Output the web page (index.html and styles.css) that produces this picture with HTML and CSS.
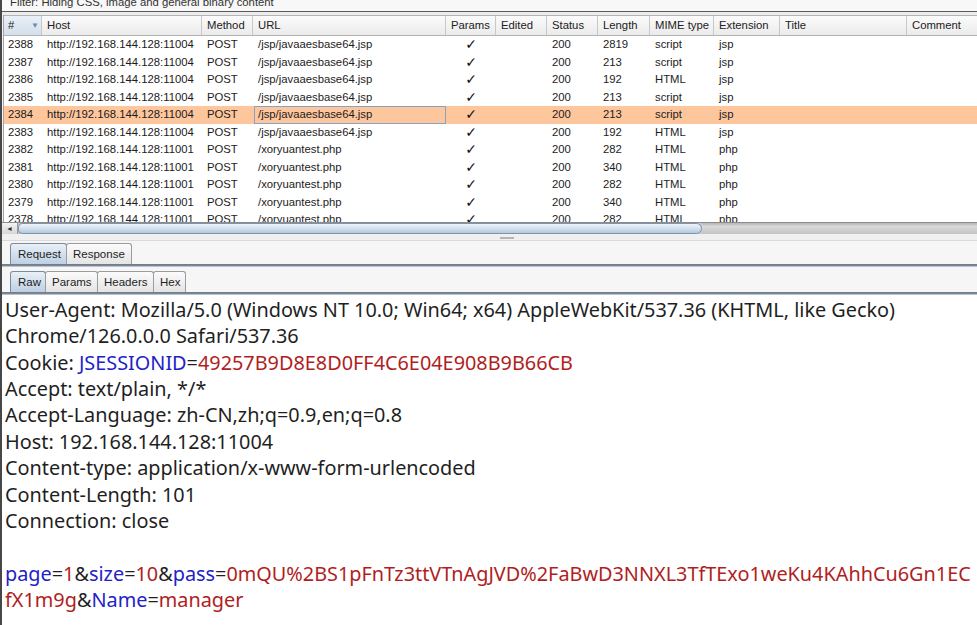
FILE: index.html
```html
<!DOCTYPE html>
<html>
<head>
<meta charset="utf-8">
<link rel="stylesheet" href="styles.css">
</head>
<body>
<div class="win">
  <div class="filter"><span>Filter: Hiding CSS, image and general binary content</span></div>
  <div class="gap"></div>
  <div class="table">
    <div class="row thead">
      <div class="th sorted">#<span class="arrow">▼</span></div>
      <div class="th">Host</div>
      <div class="th">Method</div>
      <div class="th">URL</div>
      <div class="th">Params</div>
      <div class="th">Edited</div>
      <div class="th">Status</div>
      <div class="th">Length</div>
      <div class="th">MIME type</div>
      <div class="th">Extension</div>
      <div class="th">Title</div>
      <div class="th">Comment</div>
    </div>
    <div class="tbody">
      <div class="row"><div class="td">2388</div><div class="td">http://192.168.144.128:11004</div><div class="td">POST</div><div class="td">/jsp/javaaesbase64.jsp</div><div class="td chk">✓</div><div class="td"></div><div class="td">200</div><div class="td">2819</div><div class="td">script</div><div class="td">jsp</div><div class="td"></div><div class="td"></div></div>
      <div class="row"><div class="td">2387</div><div class="td">http://192.168.144.128:11004</div><div class="td">POST</div><div class="td">/jsp/javaaesbase64.jsp</div><div class="td chk">✓</div><div class="td"></div><div class="td">200</div><div class="td">213</div><div class="td">script</div><div class="td">jsp</div><div class="td"></div><div class="td"></div></div>
      <div class="row"><div class="td">2386</div><div class="td">http://192.168.144.128:11004</div><div class="td">POST</div><div class="td">/jsp/javaaesbase64.jsp</div><div class="td chk">✓</div><div class="td"></div><div class="td">200</div><div class="td">192</div><div class="td">HTML</div><div class="td">jsp</div><div class="td"></div><div class="td"></div></div>
      <div class="row"><div class="td">2385</div><div class="td">http://192.168.144.128:11004</div><div class="td">POST</div><div class="td">/jsp/javaaesbase64.jsp</div><div class="td chk">✓</div><div class="td"></div><div class="td">200</div><div class="td">213</div><div class="td">script</div><div class="td">jsp</div><div class="td"></div><div class="td"></div></div>
      <div class="row selected"><div class="td">2384</div><div class="td">http://192.168.144.128:11004</div><div class="td">POST</div><div class="td focus">/jsp/javaaesbase64.jsp</div><div class="td chk">✓</div><div class="td"></div><div class="td">200</div><div class="td">213</div><div class="td">script</div><div class="td">jsp</div><div class="td"></div><div class="td"></div></div>
      <div class="row"><div class="td">2383</div><div class="td">http://192.168.144.128:11004</div><div class="td">POST</div><div class="td">/jsp/javaaesbase64.jsp</div><div class="td chk">✓</div><div class="td"></div><div class="td">200</div><div class="td">192</div><div class="td">HTML</div><div class="td">jsp</div><div class="td"></div><div class="td"></div></div>
      <div class="row"><div class="td">2382</div><div class="td">http://192.168.144.128:11001</div><div class="td">POST</div><div class="td">/xoryuantest.php</div><div class="td chk">✓</div><div class="td"></div><div class="td">200</div><div class="td">282</div><div class="td">HTML</div><div class="td">php</div><div class="td"></div><div class="td"></div></div>
      <div class="row"><div class="td">2381</div><div class="td">http://192.168.144.128:11001</div><div class="td">POST</div><div class="td">/xoryuantest.php</div><div class="td chk">✓</div><div class="td"></div><div class="td">200</div><div class="td">340</div><div class="td">HTML</div><div class="td">php</div><div class="td"></div><div class="td"></div></div>
      <div class="row"><div class="td">2380</div><div class="td">http://192.168.144.128:11001</div><div class="td">POST</div><div class="td">/xoryuantest.php</div><div class="td chk">✓</div><div class="td"></div><div class="td">200</div><div class="td">282</div><div class="td">HTML</div><div class="td">php</div><div class="td"></div><div class="td"></div></div>
      <div class="row"><div class="td">2379</div><div class="td">http://192.168.144.128:11001</div><div class="td">POST</div><div class="td">/xoryuantest.php</div><div class="td chk">✓</div><div class="td"></div><div class="td">200</div><div class="td">340</div><div class="td">HTML</div><div class="td">php</div><div class="td"></div><div class="td"></div></div>
      <div class="row"><div class="td">2378</div><div class="td">http://192.168.144.128:11001</div><div class="td">POST</div><div class="td">/xoryuantest.php</div><div class="td chk">✓</div><div class="td"></div><div class="td">200</div><div class="td">282</div><div class="td">HTML</div><div class="td">php</div><div class="td"></div><div class="td"></div></div>
    </div>
  </div>
  <div class="hscroll">
    <div class="sbtn">◄</div>
    <div class="thumb"></div>
    <div class="track"></div>
  </div>
  <div class="splitter"><div class="grip"></div></div>
  <div class="panel">
    <div class="tabs tabs1">
      <div class="tab sel w-req">Request</div>
      <div class="tab w-resp">Response</div>
    </div>
    <div class="tabline"></div>
    <div class="tabs tabs2">
      <div class="tab sel w-raw">Raw</div>
      <div class="tab w-params">Params</div>
      <div class="tab w-headers">Headers</div>
      <div class="tab w-hex">Hex</div>
    </div>
    <div class="tabline"></div>
    <div class="editor">
      <div class="ln">User-Agent: Mozilla/5.0 (Windows NT 10.0; Win64; x64) AppleWebKit/537.36 (KHTML, like Gecko)</div>
      <div class="ln">Chrome/126.0.0.0 Safari/537.36</div>
      <div class="ln">Cookie: <span class="k">JSESSIONID</span>=<span class="v">49257B9D8E8D0FF4C6E04E908B9B66CB</span></div>
      <div class="ln">Accept: text/plain, */*</div>
      <div class="ln">Accept-Language: zh-CN,zh;q=0.9,en;q=0.8</div>
      <div class="ln">Host: 192.168.144.128:11004</div>
      <div class="ln">Content-type: application/x-www-form-urlencoded</div>
      <div class="ln">Content-Length: 101</div>
      <div class="ln">Connection: close</div>
      <div class="ln"></div>
      <div class="ln"><span class="k">page</span>=<span class="v">1</span>&amp;<span class="k">size</span>=<span class="v">10</span>&amp;<span class="k">pass</span>=<span class="v">0mQU%2BS1pFnTz3ttVTnAgJVD%2FaBwD3NNXL3TfTExo1weKu4KAhhCu6Gn1EC</span></div>
      <div class="ln"><span class="v">fX1m9g</span>&amp;<span class="k">Name</span>=<span class="v">manager</span></div>
    </div>
  </div>
</div>
</body>
</html>
```
FILE: styles.css
```css
html, body {
  margin: 0;
  padding: 0;
  background: #f0f0f0;
}

.win {
  width: 977px;
  height: 625px;
  box-sizing: border-box;
  border-left: 2px solid #474747;
  background: #f5f5f5;
  display: flex;
  flex-direction: column;
  overflow: hidden;
  font-family: "Liberation Sans", Arial, sans-serif;
  font-size: 11.3px;
  color: #1c1c1c;
}

.filter {
  flex: none;
  height: 12px;
  box-sizing: border-box;
  border-bottom: 1px solid #5c5c5c;
  background: #f8f8f8;
  padding-left: 8px;
  line-height: 4px;
  overflow: hidden;
  color: #333;
  white-space: nowrap;
}

.gap {
  flex: none;
  height: 3px;
  background: #ececec;
}

.table {
  flex: none;
  height: 207px;
  box-sizing: border-box;
  margin-left: 1px;
  border-left: 1px solid #a3a3a3;
  background: #fff;
  overflow: hidden;
}

.row {
  display: grid;
  grid-template-columns: 38px 160px 51px 193px 50px 51px 51px 52px 64px 66px 127px 100px;
  white-space: nowrap;
}

.thead {
  height: 21px;
  box-sizing: border-box;
  border-top: 1px solid #b3b3b3;
  border-bottom: 1px solid #b3b3b3;
  background: linear-gradient(#fbfbfb, #ebebeb);
}

.th {
  border-right: 1px solid #c8c8c8;
  padding-left: 5px;
  line-height: 19px;
  overflow: hidden;
  color: #222;
}

.th.sorted {
  padding-left: 4px;
  background: linear-gradient(#e9f0f7, #d3dfeb);
  display: flex;
  justify-content: space-between;
  padding-right: 2px;
}

.arrow {
  font-size: 8px;
  color: #6a8db0;
}

.td {
  padding-left: 5px;
  height: 17.56px;
  line-height: 17.56px;
  box-sizing: border-box;
  overflow: hidden;
}

.row .td:first-child {
  padding-left: 4px;
}

.td.chk {
  padding-left: 0;
  text-align: center;
  font-family: "DejaVu Sans", sans-serif;
  font-size: 14px;
  font-weight: bold;
  color: #111;
}

.selected {
  background: #fec69c;
}

.td.focus {
  box-shadow: inset 0 0 0 1px #86a3c4;
  padding-left: 4px;
  margin-left: 1px;
}

.hscroll {
  flex: none;
  height: 12px;
  display: flex;
  box-sizing: border-box;
  border-top: 1px solid #8c8c8c;
  background: #c9c9c9;
}

.sbtn {
  width: 15px;
  flex: none;
  display: flex;
  align-items: center;
  justify-content: center;
  font-size: 7px;
  color: #333;
  background: linear-gradient(#f3f3f3, #d6d6d6);
  border-right: 1px solid #9a9a9a;
}

.thumb {
  width: 684px;
  flex: none;
  box-sizing: border-box;
  border: 1px solid #8093a8;
  border-radius: 6px 8px 8px 6px;
  background: linear-gradient(#eef4fa, #d6e3ef 45%, #b4c9de);
}

.track {
  flex: 1;
  background: linear-gradient(#b4b4b4, #d9d9d9 30%, #c4c4c4);
}

.splitter {
  flex: none;
  height: 7px;
  box-sizing: border-box;
  border-bottom: 1px solid #dadada;
  background: #f0f0f0;
  padding-top: 3px;
}

.grip {
  width: 14px;
  height: 2px;
  margin-left: 498px;
  background: #b5b5b5;
}

.panel {
  flex: 1;
  display: flex;
  flex-direction: column;
  background: #f6f6f6;
  min-height: 0;
}

.tabs {
  flex: none;
  display: flex;
  align-items: flex-end;
  padding-left: 8px;
  height: 21px;
}

.tabs1 {
  margin-top: 2px;
}

.tabs2 {
  margin-top: 4px;
}

.tab {
  height: 21px;
  box-sizing: border-box;
  padding-left: 6px;
  border: 1px solid #9c9c9c;
  border-bottom: none;
  border-radius: 3px 3px 0 0;
  background: linear-gradient(#fbfbfb, #e4e4e4);
  line-height: 20px;
  font-size: 11.5px;
  color: #1e1e1e;
  margin-right: -1px;
  white-space: nowrap;
  overflow: hidden;
}

.tab.sel {
  background: linear-gradient(#e9f0f7, #bdd0e2);
  border-color: #7d8c9d;
  padding-left: 7px;
}

.w-req { width: 57px; }
.w-resp { width: 66px; }
.w-raw { width: 36px; }
.w-params { width: 53px; }
.w-headers { width: 57px; }
.w-hex { width: 33px; }

.tabline {
  flex: none;
  height: 3px;
  background: linear-gradient(#6e7b8a 0, #7e8a98 2px, #b9c4cf 2px);
}

.editor {
  flex: 1;
  background: #fff;
  padding: 2px 0 0 3px;
  font-family: "Noto Sans", "Open Sans", sans-serif;
  font-size: 19.85px;
  line-height: 26.36px;
  color: #1f1f1f;
  overflow: hidden;
}

.ln {
  height: 26.36px;
  white-space: pre;
}

.k {
  color: #2222c8;
}

.v {
  color: #b01e1e;
}
```
